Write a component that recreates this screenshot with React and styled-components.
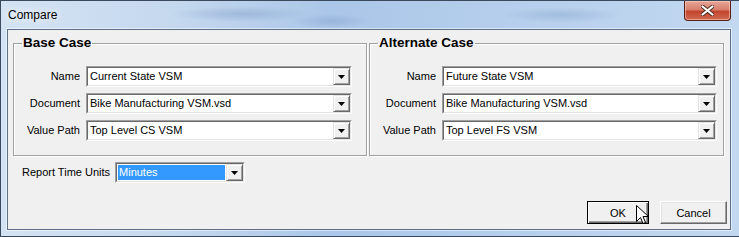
import React from "react";
import { styled, createGlobalStyle } from "styled-components";

const Global = createGlobalStyle`
  html, body {
    margin: 0;
    padding: 0;
    background: #ffffff;
  }
  * {
    box-sizing: border-box;
  }
`;

const Window = styled.div`
  position: relative;
  width: 739px;
  height: 237px;
  display: flex;
  flex-direction: column;
  border-top: 1px solid #3a4a5c;
  border-left: 1px solid #3a4a5c;
  border-bottom: 1px solid #3a4a5c;
  background:
    radial-gradient(ellipse 70px 8px at 240px 13px, rgba(120, 150, 195, 0.4), transparent),
    radial-gradient(ellipse 40px 7px at 330px 20px, rgba(120, 150, 195, 0.35), transparent),
    radial-gradient(ellipse 60px 8px at 560px 14px, rgba(120, 150, 195, 0.35), transparent),
    linear-gradient(90deg, #d4e3f3 0%, #c3d7ee 25%, #aac6e8 45%, #b6cfec 70%, #c2d8f0 100%);
  font-family: "Liberation Sans", Arial, sans-serif;
  font-size: 11px;
  color: #000;
`;

const TitleBar = styled.div`
  height: 28px;
  display: flex;
  align-items: flex-start;
  justify-content: space-between;
  padding-left: 7px;
`;

const Title = styled.div`
  font-size: 12px;
  line-height: 28px;
  color: #000;
  text-shadow: 0 0 6px rgba(255, 255, 255, 0.95), 0 0 10px rgba(255, 255, 255, 0.8);
`;

const CloseButton = styled.div`
  width: 47px;
  height: 20px;
  margin-right: 8px;
  display: flex;
  align-items: center;
  justify-content: center;
  border: 1px solid #5a1f14;
  border-top: none;
  border-radius: 0 0 4px 4px;
  background: linear-gradient(180deg, #e6a597 0%, #d8806c 45%, #c4452e 55%, #cf6a4f 100%);
  box-shadow: inset 0 0 0 1px rgba(255, 220, 210, 0.5);
`;

const Client = styled.div`
  flex: 1;
  margin: 0 8px 6px 6px;
  display: flex;
  flex-direction: column;
  background: #f0f0f0;
  border: 1px solid #5e7088;
  box-shadow: 0 0 0 1px rgba(255, 255, 255, 0.5);
`;

const Groups = styled.div`
  display: flex;
  gap: 2px;
  padding: 5px 0 0 5px;
`;

const GroupBox = styled.fieldset`
  margin: 0;
  padding: 0;
  width: ${(p) => p.$width}px;
  height: 121px;
  border: 1px solid #a0a0a0;
  box-shadow: 1px 1px 0 #fff, inset 1px 1px 0 #fff;
`;

const Legend = styled.legend`
  margin-left: 8px;
  padding: 0 1px;
  font-size: 13.5px;
  font-weight: bold;
  line-height: 16px;
  color: #000;
`;

const Fields = styled.div`
  display: grid;
  grid-template-columns: 66px ${(p) => p.$comboWidth}px;
  column-gap: 6px;
  row-gap: 6px;
  padding-top: 15px;
`;

const Label = styled.div`
  text-align: right;
  line-height: 21px;
  white-space: nowrap;
`;

const ComboFrame = styled.div`
  display: flex;
  width: ${(p) => (p.$width ? `${p.$width}px` : "auto")};
  height: 21px;
  border: 1px solid;
  border-color: #a0a0a0 #ffffff #ffffff #a0a0a0;
`;

const ComboInner = styled.div`
  flex: 1;
  display: flex;
  border: 1px solid;
  border-color: #696969 #e3e3e3 #e3e3e3 #696969;
  background: #fff;
`;

const ComboText = styled.div`
  flex: 1;
  margin: 1px;
  padding-left: 1px;
  line-height: 15px;
  white-space: nowrap;
  overflow: hidden;
  background: ${(p) => (p.$selected ? "#3399ff" : "transparent")};
  color: ${(p) => (p.$selected ? "#fff" : "#000")};
`;

const DropButton = styled.div`
  width: 17px;
  display: flex;
  align-items: center;
  justify-content: center;
  background: #f0f0f0;
  border: 1px solid;
  border-color: #e3e3e3 #696969 #696969 #e3e3e3;
  box-shadow: inset 1px 1px 0 #fff, inset -1px -1px 0 #a0a0a0;
`;

const ReportRow = styled.div`
  display: flex;
  align-items: center;
  gap: 5px;
  padding: 6px 0 0 14px;
`;

const ButtonRow = styled.div`
  margin-top: auto;
  display: flex;
  justify-content: flex-end;
  gap: 11px;
  padding: 0 3px 5px 0;
`;

const Button = styled.div`
  position: relative;
  width: ${(p) => p.$width}px;
  height: 23px;
  display: flex;
  align-items: center;
  justify-content: center;
  font-size: 11px;
  background: #f0f0f0;
  border: 1px solid;
  border-color: ${(p) =>
    p.$default ? "#000" : "#fff #696969 #696969 #fff"};
  box-shadow: ${(p) =>
    p.$default
      ? "inset 1px 1px 0 #fff, inset -1px -1px 0 #696969, inset -2px -2px 0 #a0a0a0"
      : "inset -1px -1px 0 #a0a0a0, inset 1px 1px 0 #e3e3e3"};
`;

const Cursor = styled.svg`
  position: absolute;
  left: 48px;
  top: 3px;
`;

function Arrow() {
  return (
    <svg width="7" height="4" viewBox="0 0 7 4">
      <path d="M0 0H7L3.5 4Z" fill="#000" />
    </svg>
  );
}

function ComboBox({ value, width, selected }) {
  return (
    <ComboFrame $width={width}>
      <ComboInner>
        <ComboText $selected={selected}>{value}</ComboText>
        <DropButton>
          <Arrow />
        </DropButton>
      </ComboInner>
    </ComboFrame>
  );
}

function CaseGroup({ title, width, comboWidth, name, document, path }) {
  return (
    <GroupBox $width={width}>
      <Legend>{title}</Legend>
      <Fields $comboWidth={comboWidth}>
        <Label>Name</Label>
        <ComboBox value={name} />
        <Label>Document</Label>
        <ComboBox value={document} />
        <Label>Value Path</Label>
        <ComboBox value={path} />
      </Fields>
    </GroupBox>
  );
}

export default function App() {
  return (
    <>
      <Global />
      <Window>
        <TitleBar>
          <Title>Compare</Title>
          <CloseButton>
            <svg width="13" height="11" viewBox="0 0 13 11">
              <path
                d="M1.5 1.5L11.5 9.5M11.5 1.5L1.5 9.5"
                stroke="#4a2a24"
                strokeWidth="4"
                strokeLinecap="round"
              />
              <path
                d="M1.5 1.5L11.5 9.5M11.5 1.5L1.5 9.5"
                stroke="#fff"
                strokeWidth="2.2"
                strokeLinecap="round"
              />
            </svg>
          </CloseButton>
        </TitleBar>
        <Client>
          <Groups>
            <CaseGroup
              title="Base Case"
              width={354}
              comboWidth={266}
              name="Current State VSM"
              document="Bike Manufacturing VSM.vsd"
              path="Top Level CS VSM"
            />
            <CaseGroup
              title="Alternate Case"
              width={355}
              comboWidth={275}
              name="Future State VSM"
              document="Bike Manufacturing VSM.vsd"
              path="Top Level FS VSM"
            />
          </Groups>
          <ReportRow>
            <Label>Report Time Units</Label>
            <ComboBox value="Minutes" width={130} selected />
          </ReportRow>
          <ButtonRow>
            <Button $width={62} $default>
              OK
              <Cursor width="13" height="20" viewBox="0 0 13 20">
                <path
                  d="M0.5 0.5V16.5L4.5 12.5L7 18.5L9.5 17.5L7 11.5H12.5Z"
                  fill="#fff"
                  stroke="#000"
                  strokeWidth="1"
                  strokeLinejoin="miter"
                />
              </Cursor>
            </Button>
            <Button $width={67}>Cancel</Button>
          </ButtonRow>
        </Client>
      </Window>
    </>
  );
}
